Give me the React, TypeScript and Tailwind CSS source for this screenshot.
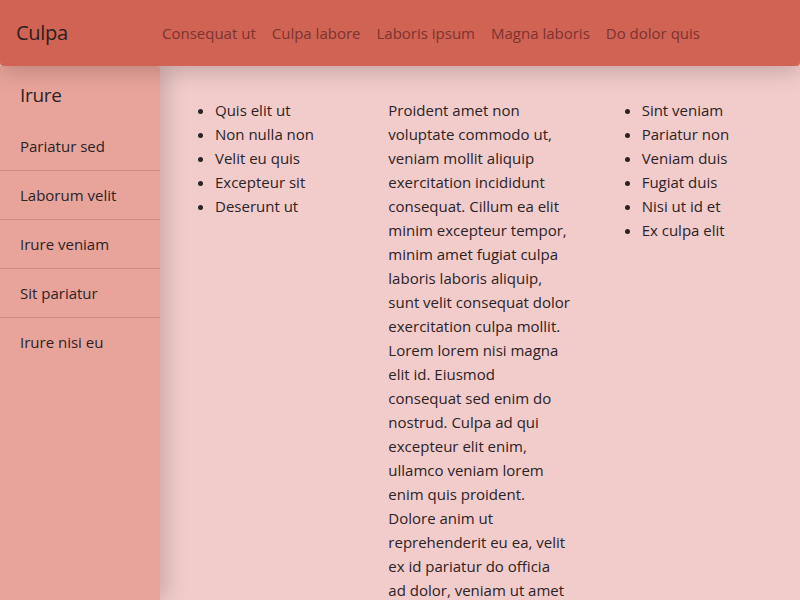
const navLinks = ['Consequat ut', 'Culpa labore', 'Laboris ipsum', 'Magna laboris', 'Do dolor quis'];
const sideItems = ['Pariatur sed', 'Laborum velit', 'Irure veniam', 'Sit pariatur', 'Irure nisi eu'];
const leftList = ['Quis elit ut', 'Non nulla non', 'Velit eu quis', 'Excepteur sit', 'Deserunt ut'];
const rightList = ['Sint veniam', 'Pariatur non', 'Veniam duis', 'Fugiat duis', 'Nisi ut id et', 'Ex culpa elit'];

// nbsp keeps "ad dolor," together so the wrap matches the original
const bodyText =
  'Proident amet non voluptate commodo ut, veniam mollit aliquip exercitation incididunt consequat. Cillum ea elit minim excepteur tempor, minim amet fugiat culpa laboris laboris aliquip, sunt velit consequat dolor exercitation culpa mollit. Lorem lorem nisi magna elit id. Eiusmod consequat sed enim do nostrud. Culpa ad qui excepteur elit enim, ullamco veniam lorem enim quis proident. Dolore anim ut reprehenderit eu ea, velit ex id pariatur do officia ad\u00A0dolor, veniam ut amet sint.';

export default function App() {
  return (
    <div className="h-[600px] w-[800px] overflow-hidden bg-[#f2cccb] font-['Open_Sans','Noto_Sans',sans-serif] text-[#2a2326]">
      <header className="relative z-20 flex h-[66px] items-center rounded-b-[4px] bg-[#d16354] pl-4 shadow-[0_4px_24px_rgba(0,0,0,0.22)]">
        <span className="w-[146px] text-[20px] tracking-[-0.3px] text-[#2a1f1f]">Culpa</span>
        <nav className="flex gap-4">
          {navLinks.map((l) => (
            <a key={l} className="text-[15px] text-[#7a3430]">
              {l}
            </a>
          ))}
        </nav>
      </header>
      <div className="flex h-[534px]">
        <aside className="relative z-10 w-[160px] shrink-0 rounded-tr-[4px] bg-[#e8a49b] shadow-[6px_0_22px_rgba(0,0,0,0.18)]">
          <h2 className="px-5 pt-[17px] pb-[15px] text-[19px] leading-6 tracking-[-0.3px]">Irure</h2>
          <ul>
            {sideItems.map((s, i) => (
              <li
                key={s}
                className={`px-5 py-3 text-[15px] leading-6 ${
                  i < sideItems.length - 1 ? 'border-b border-[#cf8a81]' : ''
                }`}
              >
                {s}
              </li>
            ))}
          </ul>
        </aside>
        <main className="grid flex-1 grid-cols-3 pt-8 text-[15px] leading-6">
          <div className="px-[15px]">
            <ul className="list-disc pl-10">
              {leftList.map((t) => (
                <li key={t}>{t}</li>
              ))}
            </ul>
          </div>
          <div className="px-[15px]">
            <p>{bodyText}</p>
          </div>
          <div className="px-[15px]">
            <ul className="list-disc pl-10">
              {rightList.map((t) => (
                <li key={t}>{t}</li>
              ))}
            </ul>
          </div>
        </main>
      </div>
    </div>
  );
}
